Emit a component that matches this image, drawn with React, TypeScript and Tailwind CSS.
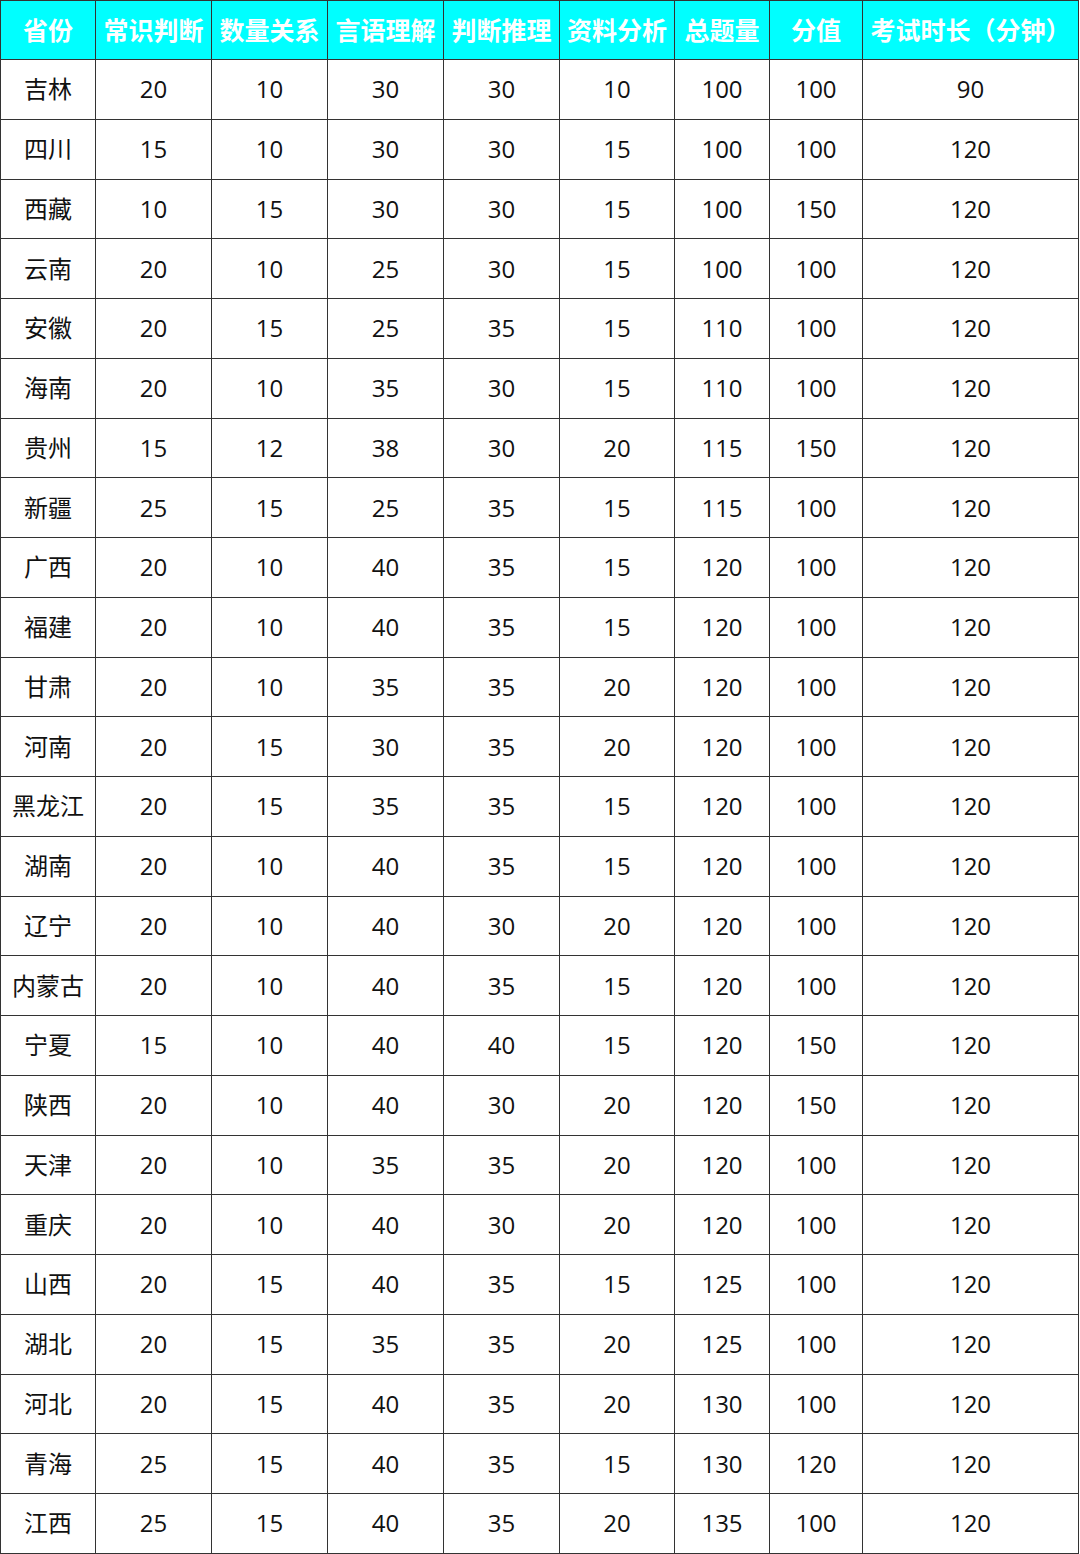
import React from 'react';

const headers = ['省份', '常识判断', '数量关系', '言语理解', '判断推理', '资料分析', '总题量', '分值', '考试时长（分钟）'];

const rows: (string | number)[][] = [
    ['吉林', 20, 10, 30, 30, 10, 100, 100, 90],
    ['四川', 15, 10, 30, 30, 15, 100, 100, 120],
    ['西藏', 10, 15, 30, 30, 15, 100, 150, 120],
    ['云南', 20, 10, 25, 30, 15, 100, 100, 120],
    ['安徽', 20, 15, 25, 35, 15, 110, 100, 120],
    ['海南', 20, 10, 35, 30, 15, 110, 100, 120],
    ['贵州', 15, 12, 38, 30, 20, 115, 150, 120],
    ['新疆', 25, 15, 25, 35, 15, 115, 100, 120],
    ['广西', 20, 10, 40, 35, 15, 120, 100, 120],
    ['福建', 20, 10, 40, 35, 15, 120, 100, 120],
    ['甘肃', 20, 10, 35, 35, 20, 120, 100, 120],
    ['河南', 20, 15, 30, 35, 20, 120, 100, 120],
    ['黑龙江', 20, 15, 35, 35, 15, 120, 100, 120],
    ['湖南', 20, 10, 40, 35, 15, 120, 100, 120],
    ['辽宁', 20, 10, 40, 30, 20, 120, 100, 120],
    ['内蒙古', 20, 10, 40, 35, 15, 120, 100, 120],
    ['宁夏', 15, 10, 40, 40, 15, 120, 150, 120],
    ['陕西', 20, 10, 40, 30, 20, 120, 150, 120],
    ['天津', 20, 10, 35, 35, 20, 120, 100, 120],
    ['重庆', 20, 10, 40, 30, 20, 120, 100, 120],
    ['山西', 20, 15, 40, 35, 15, 125, 100, 120],
    ['湖北', 20, 15, 35, 35, 20, 125, 100, 120],
    ['河北', 20, 15, 40, 35, 20, 130, 100, 120],
    ['青海', 25, 15, 40, 35, 15, 130, 120, 120],
    ['江西', 25, 15, 40, 35, 20, 135, 100, 120],
];

const App: React.FC = () => {
    return (
        <div
            className="w-[1080px] h-[1554px] bg-white overflow-hidden"
            style={{ fontFamily: '"Open Sans", "Noto Sans CJK SC", sans-serif' }}
        >
            <div className="w-[1079px] grid grid-cols-[95px_116px_116px_116px_116px_115px_95px_93px_1fr] grid-rows-[59px_repeat(25,59.76px)] border-l border-t border-[#333]">
                {/* header */}
                {headers.map((h) => (
                    <div
                        key={h}
                        className="bg-[#00ffff] border-r border-b border-[#333] flex items-center justify-center text-white text-[25px] font-bold whitespace-nowrap"
                        style={{ fontFamily: '"Noto Sans CJK SC", sans-serif' }}
                    >
                        {h}
                    </div>
                ))}

                {/* body */}
                {rows.map((r) =>
                    r.map((v, i) => (
                        <div
                            key={r[0] + '-' + i}
                            className="border-r border-b border-[#333] flex items-center justify-center text-[#111] text-[24px] whitespace-nowrap"
                        >
                            {v}
                        </div>
                    ))
                )}
            </div>
        </div>
    );
};

export default App;
